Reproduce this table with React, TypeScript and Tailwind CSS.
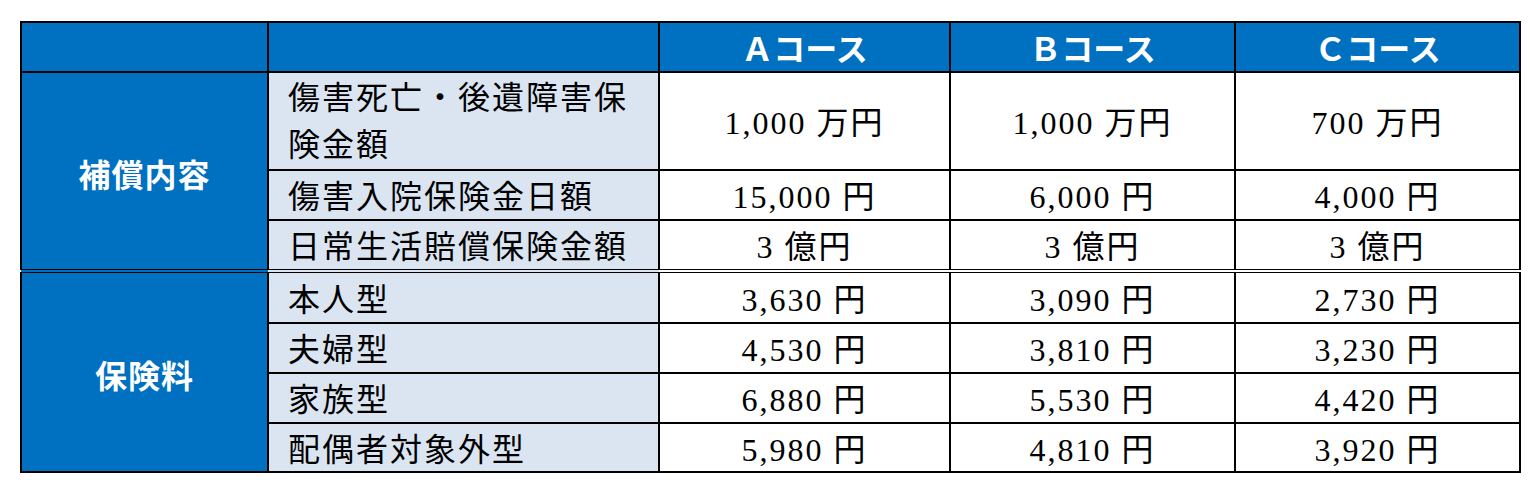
const courses = ["Ａコース", "Ｂコース", "Ｃコース"];

const coverage = [
  { label: ["傷害死亡・後遺障害保", "険金額"], values: ["1,000 万円", "1,000 万円", "700 万円"], h: "h-[98px]" },
  { label: ["傷害入院保険金日額"], values: ["15,000 円", "6,000 円", "4,000 円"], h: "h-[50px]" },
  { label: ["日常生活賠償保険金額"], values: ["3 億円", "3 億円", "3 億円"], h: "h-[51px]" },
];

const premiums = [
  { label: "本人型", values: ["3,630 円", "3,090 円", "2,730 円"], h: "h-[52px]" },
  { label: "夫婦型", values: ["4,530 円", "3,810 円", "3,230 円"], h: "h-[50px]" },
  { label: "家族型", values: ["6,880 円", "5,530 円", "4,420 円"], h: "h-[50px]" },
  { label: "配偶者対象外型", values: ["5,980 円", "4,810 円", "3,920 円"], h: "h-[49px]" },
];

const cell = "border-2 border-black";
const labelCell = `${cell} bg-[#dbe5f1] pl-[19px] text-left align-middle text-[32px] tracking-[2px] text-black`;
const valueCell = `${cell} bg-white pt-[4px] text-center align-middle text-[32px] leading-[40px] tracking-[2px] text-black`;
const groupCell = `${cell} bg-[#0070c0] pt-[4px] text-center align-middle font-['Noto_Sans_CJK_JP',sans-serif] text-[32px] font-bold tracking-[1px] text-white`;

export default function App() {
  return (
    <div className="min-h-[500px] bg-white pt-[21px] pl-[20px] font-['Liberation_Serif','Noto_Sans_CJK_JP',serif]">
      <table className="w-[1501px] table-fixed border-collapse">
        <colgroup>
          <col className="w-[247px]" />
          <col className="w-[391px]" />
          <col className="w-[291px]" />
          <col className="w-[285px]" />
          <col className="w-[285px]" />
        </colgroup>
        <thead>
          <tr className="h-[50px]">
            <th className={`${cell} bg-[#0070c0]`} />
            <th className={`${cell} bg-[#0070c0]`} />
            {courses.map((c) => (
              <th
                key={c}
                className={`${cell} bg-[#0070c0] text-center align-middle font-['Noto_Sans_CJK_JP',sans-serif] text-[32px] font-bold leading-[40px] text-white`}
              >
                {c}
              </th>
            ))}
          </tr>
        </thead>
        <tbody>
          {coverage.map((row, i) => {
            const last = i === coverage.length - 1;
            const edge = last ? "border-b-4 border-double" : "";
            const twoLines = row.label.length > 1;
            return (
              <tr key={row.label.join("")} className={row.h}>
                {i === 0 && (
                  <th rowSpan={3} className={`${groupCell} border-b-4 border-double`}>
                    補償内容
                  </th>
                )}
                <td className={`${labelCell} ${edge} ${twoLines ? "pt-[2px] leading-[47px]" : "pt-[4px] leading-[40px]"}`}>
                  {row.label.map((line) => (
                    <div key={line}>{line}</div>
                  ))}
                </td>
                {row.values.map((v, j) => (
                  <td key={j} className={`${valueCell} ${edge}`}>
                    {v}
                  </td>
                ))}
              </tr>
            );
          })}
          {premiums.map((row, i) => (
            <tr key={row.label} className={row.h}>
              {i === 0 && (
                <th rowSpan={4} className={groupCell}>
                  保険料
                </th>
              )}
              <td className={`${labelCell} pt-[4px] leading-[40px]`}>{row.label}</td>
              {row.values.map((v, j) => (
                <td key={j} className={valueCell}>
                  {v}
                </td>
              ))}
            </tr>
          ))}
        </tbody>
      </table>
    </div>
  );
}
